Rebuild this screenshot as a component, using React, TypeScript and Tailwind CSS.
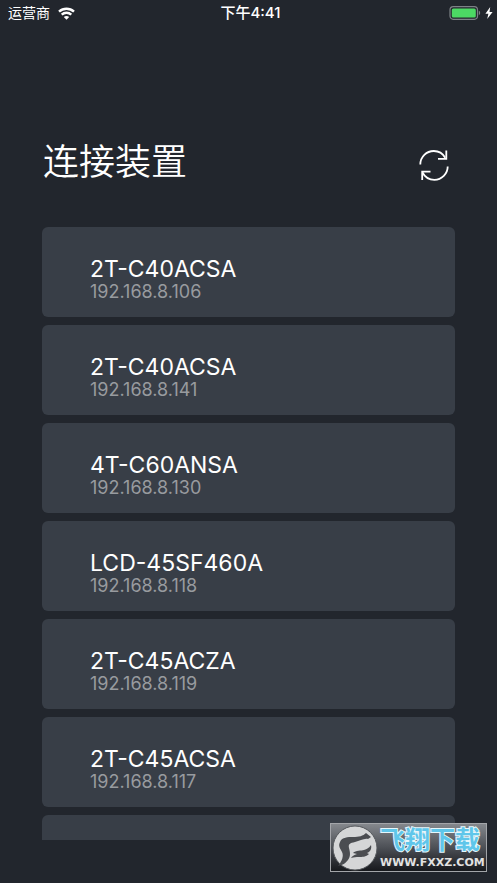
const devices = [
  { name: '2T-C40ACSA', ip: '192.168.8.106' },
  { name: '2T-C40ACSA', ip: '192.168.8.141' },
  { name: '4T-C60ANSA', ip: '192.168.8.130' },
  { name: 'LCD-45SF460A', ip: '192.168.8.118' },
  { name: '2T-C45ACZA', ip: '192.168.8.119' },
  { name: '2T-C45ACSA', ip: '192.168.8.117' },
  { name: '', ip: '' },
]

function StatusBar() {
  return (
    <div className="grid h-[26px] shrink-0 grid-cols-3 items-center pl-2 pr-1 text-white">
      <div className="flex items-center gap-2 text-sm">
        <span>运营商</span>
        <svg width="17" height="13" viewBox="0 0 17 13" fill="none" stroke="currentColor" strokeWidth="2.4">
          <path d="M1 4.6C5.2.8 11.8.8 16 4.6" />
          <path d="M3.7 7.6c2.7-2.5 6.9-2.5 9.6 0" />
          <path d="M8.5 12.8 5.8 10c1.5-1.5 3.900-1.500 5.400 0z" fill="currentColor" stroke="none" />
        </svg>
      </div>
      <span className="text-center text-[15px] font-medium">下午4:41</span>
      <div className="flex items-center justify-end gap-1">
        <svg width="32" height="14" viewBox="0 0 32 14">
          <rect x="1" y="0.7" width="27.5" height="12.6" rx="3.2" fill="none" stroke="#7d8186" strokeWidth="1.2" />
          <rect x="2.8" y="2.5" width="24" height="9" rx="1.6" fill="#4cd964" />
          <path d="M29.8 4.8c1.8.6 1.8 3.8 0 4.4z" fill="#7d8186" />
        </svg>
        <svg width="8" height="12" viewBox="0 0 8 12" fill="currentColor">
          <path d="M5.2 0 .4 6.8h3L2.200 12 7.600 5H4.500z" />
        </svg>
      </div>
    </div>
  )
}

function RefreshIcon() {
  return (
    <svg width="32" height="32" viewBox="0 0 32 32" fill="none" stroke="currentColor" strokeWidth="1.8">
      <path d="M2.3 15.5C2.3 7.8 8.5 2 15.8 2c4.8 0 9 2.5 11.4 6.8" />
      <path d="M28.3 1.5v8.3H20" />
      <path d="M29.7 17.5c0 7.3-6 13.3-13.3 13.3-5.2 0-9.6-2.9-11.9-7.3" />
      <path d="M4.2 31v-8.3h8.3" />
    </svg>
  )
}

function Watermark() {
  return (
    <div className="absolute right-[10px] bottom-[11px] flex h-[49px] w-[157px] items-center gap-0.5 border border-[#a3a5a9] bg-linear-to-b from-[#85888d] via-[#4d5056] to-[#17191d] pl-px">
      <svg className="shrink-0" width="46" height="46" viewBox="0 0 46 46">
        <circle cx="23" cy="23" r="22" fill="#d5d6d7" stroke="#55585c" />
        <path
          fill="#4b4d51"
          d="M6 41C10 36 12 31 10 27C8 23 6 21 8 17C10 12 16 12 21 12C27 12 31 11 34 8L39 12L36 14C32 13 28 16 23 17C18 18 16 19 17 23C18 27 19 31 16 35C13 39 10 40 6 41Z"
        />
        <path
          fill="#4b4d51"
          d="M21 28C24 25 29 26 32 25C35 24 37 23 39 20C40 24 38 27 35 28L37 29C34 32 30 32 27 32C24 32 22 32 19 33C20 31 22 30 25 29Z"
        />
      </svg>
      <div className="flex flex-col gap-1 whitespace-nowrap">
        <span className="text-[25px] leading-[26px] font-bold text-[#5fc6ea] [-webkit-text-stroke:2px_#e6f7fc] [paint-order:stroke_fill]">
          飞翔下载
        </span>
        <span className="font-['DejaVu_Sans',sans-serif] text-[11px] leading-3 font-bold text-[#e2e2e2]">
          WWW.FXXZ.COM
        </span>
      </div>
    </div>
  )
}

export default function App() {
  return (
    <div className="relative flex h-screen flex-col overflow-hidden bg-[#22262d] font-['Inter','Noto_Sans_CJK_SC',sans-serif]">
      <StatusBar />
      <header className="mt-[110px] flex h-[52px] shrink-0 items-center justify-between pr-[47px] pl-[43px] text-white">
        <h1 className="text-4xl font-[350]">连接装置</h1>
        <button type="button" aria-label="刷新" className="mt-1.5 cursor-pointer">
          <RefreshIcon />
        </button>
      </header>
      <main className="mx-[42px] mt-[39px] mb-[43px] min-h-0 flex-1 overflow-hidden">
        <ul className="flex flex-col gap-2">
          {devices.map(({ name, ip }, i) => (
            <li
              key={i}
              className="flex h-[90px] flex-col justify-center rounded-md bg-[#383e47] px-12 pt-4"
            >
              <span className="text-[23px] leading-6 text-white">{name}</span>
              <span className="text-[18px] leading-[22px] text-[#989b9f]">{ip}</span>
            </li>
          ))}
        </ul>
      </main>
      <Watermark />
    </div>
  )
}
